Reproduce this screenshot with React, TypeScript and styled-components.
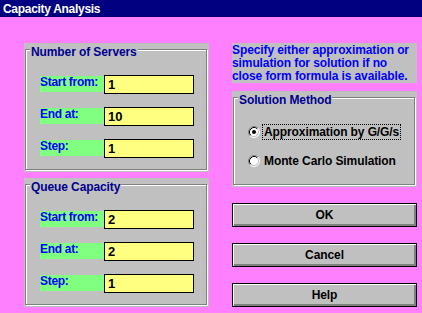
import styled, { createGlobalStyle } from "styled-components";

const GlobalStyle = createGlobalStyle`
  html, body {
    margin: 0;
    padding: 0;
    background: #ff80ff;
  }
  * {
    box-sizing: border-box;
  }
`;

const Window = styled.div`
  width: 422px;
  height: 313px;
  background: #ff80ff;
  font-family: "Liberation Sans", Arial, sans-serif;
  font-weight: bold;
  font-size: 12px;
  letter-spacing: -0.1px;
  overflow: hidden;
`;

const TitleBar = styled.div`
  height: 17px;
  background: #000080;
  color: #fff;
  padding: 3px 0 0 3px;
  line-height: 12px;
  letter-spacing: -0.3px;
`;

const Body = styled.div`
  display: grid;
  grid-template-columns: 185px 185px;
  column-gap: 23px;
  padding: 26px 0 0 24px;
`;

const Column = styled.div<{ $gap?: number }>`
  display: flex;
  flex-direction: column;
  gap: ${(p) => p.$gap ?? 0}px;
`;

const Panel = styled.div<{ $height: number }>`
  height: ${(p) => p.$height}px;
  background: #c0c0c0;
  padding: 6px 2px 2px 1px;
  display: flex;
`;

const Frame = styled.div<{ $top: number }>`
  position: relative;
  flex: 1;
  border: 1px solid #808080;
  box-shadow: 1px 1px 0 #fff, inset 1px 1px 0 #fff;
  padding: ${(p) => p.$top}px 0 0 14px;
  display: flex;
  flex-direction: column;
  gap: 13px;
`;

const Caption = styled.span`
  position: absolute;
  top: -4px;
  left: 4px;
  padding: 0 1px;
  background: #c0c0c0;
  color: #000090;
  line-height: 12px;
`;

const FieldRow = styled.div`
  display: flex;
  align-items: flex-start;
  height: 19px;
`;

const FieldLabel = styled.div`
  width: 64px;
  height: 16px;
  margin-top: 1px;
  background: #80ff80;
  color: #0000ff;
  line-height: 13px;
  letter-spacing: -0.3px;
`;

const FieldInput = styled.div`
  width: 90px;
  height: 19px;
  background: #ffff80;
  border: 1px solid #000;
  color: #000;
  padding: 2px 0 0 3px;
  line-height: 14px;
  font-size: 13px;
`;

const Hint = styled.div`
  height: 40px;
  background: #c0c0c0;
  color: #0000ff;
  line-height: 13px;
  padding-top: 1px;
  margin-bottom: 8px;
  white-space: nowrap;
`;

const RadioRow = styled.div`
  display: flex;
  align-items: center;
  height: 16px;
  color: #000;
`;

const RadioText = styled.span<{ $focused?: boolean }>`
  margin-left: 2px;
  padding: 0 1px;
  line-height: 14px;
  border: 1px dotted ${(p) => (p.$focused ? "#000" : "transparent")};
`;

const Buttons = styled.div`
  display: flex;
  flex-direction: column;
  gap: 16px;
  margin-top: 16px;
`;

const Button = styled.button`
  width: 185px;
  height: 24px;
  padding: 0;
  background: #c0c0c0;
  border: 1px solid #000;
  box-shadow: inset 1px 1px 0 #fff, inset -2px -2px 0 #808080;
  font: inherit;
  letter-spacing: inherit;
  color: #000;
  line-height: 20px;
  text-align: center;
`;

function Radio({ checked }: { checked?: boolean }) {
  return (
    <svg width="12" height="12" viewBox="0 0 12 12">
      <circle cx="6" cy="6" r="5" fill="#fff" />
      <path d="M2.11 9.89 A5.5 5.5 0 0 1 9.89 2.11" stroke="#808080" fill="none" />
      <path d="M9.89 2.11 A5.5 5.5 0 0 1 2.11 9.89" stroke="#fff" fill="none" />
      <path d="M2.82 9.18 A4.5 4.5 0 0 1 9.18 2.82" stroke="#000" fill="none" />
      <path d="M9.18 2.82 A4.5 4.5 0 0 1 2.82 9.18" stroke="#c0c0c0" fill="none" />
      {checked && <circle cx="6" cy="6" r="2" fill="#000" />}
    </svg>
  );
}

function Field({ label, value }: { label: string; value: string }) {
  return (
    <FieldRow>
      <FieldLabel>{label}</FieldLabel>
      <FieldInput>{value}</FieldInput>
    </FieldRow>
  );
}

function RangeGroup({ title, values }: { title: string; values: string[] }) {
  return (
    <Panel $height={129}>
      <Frame $top={25}>
        <Caption>{title}</Caption>
        <Field label="Start from:" value={values[0]} />
        <Field label="End at:" value={values[1]} />
        <Field label="Step:" value={values[2]} />
      </Frame>
    </Panel>
  );
}

export default function App() {
  return (
    <Window>
      <GlobalStyle />
      <TitleBar>Capacity Analysis</TitleBar>
      <Body>
        <Column $gap={6}>
          <RangeGroup title="Number of Servers" values={["1", "10", "1"]} />
          <RangeGroup title="Queue Capacity" values={["2", "2", "1"]} />
        </Column>
        <Column>
          <Hint>
            Specify either approximation or
            <br />
            simulation for solution if no
            <br />
            close form formula is available.
          </Hint>
          <Panel $height={96}>
            <Frame $top={26}>
              <Caption>Solution Method</Caption>
              <RadioRow>
                <Radio checked />
                <RadioText $focused>Approximation by G/G/s</RadioText>
              </RadioRow>
              <RadioRow>
                <Radio />
                <RadioText>Monte Carlo Simulation</RadioText>
              </RadioRow>
            </Frame>
          </Panel>
          <Buttons>
            <Button>OK</Button>
            <Button>Cancel</Button>
            <Button>Help</Button>
          </Buttons>
        </Column>
      </Body>
    </Window>
  );
}
